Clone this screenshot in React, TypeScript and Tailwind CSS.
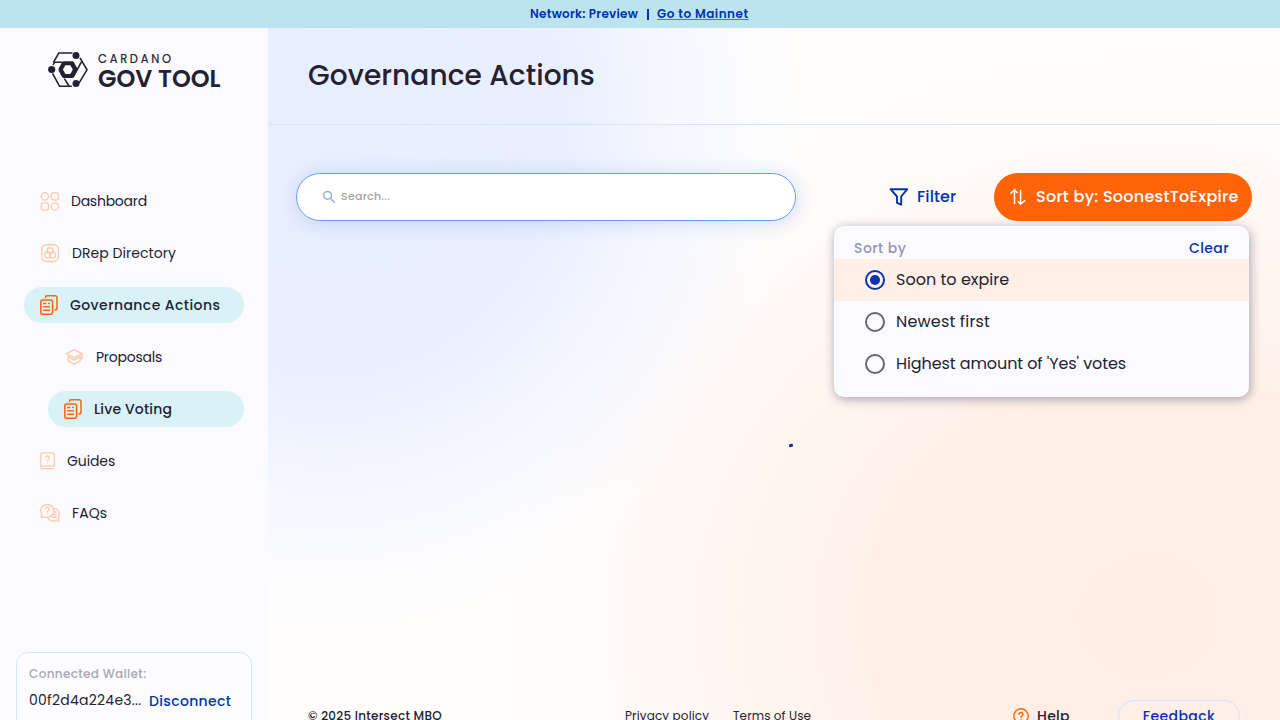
import React from "react";

const Logo = () => (
  <svg width="40" height="36" viewBox="0 0 40 36" fill="none" stroke="#242232" strokeWidth="1.6">
    <path d="M5.4 10.4 L10.8 1 H24.5" />
    <path d="M32 5.8 L39 17.8 L31 31.2" />
    <path d="M33.6 9.6 L25.6 24" />
    <path d="M5 12.8 L6.6 10.2 H14" />
    <path d="M4.5 21.4 L11.6 34.3 H23.8" />
    <path d="M16.4 26.6 L21 34" />
    <g fill="#242232" stroke="none">
      <circle cx="28" cy="3.4" r="3.5" />
      <circle cx="3.7" cy="17.5" r="3.6" />
      <circle cx="28" cy="31.6" r="3.5" />
      <path
        fillRule="evenodd"
        d="M15.6 9.2 h8.8 q.9 0 1.4 .8 l3.4 6.3 q.6 1.3 0 2.6 l-3.4 6.3 q-.5 .8 -1.4 .8 h-8.8 q-.9 0 -1.4 -.8 l-3.4 -6.3 q-.6 -1.3 0 -2.6 l3.4 -6.3 q.5 -.8 1.4 -.8z M17.4 13.2 L14.9 17.6 L17.4 22.1 H22.3 L24.8 17.6 L22.3 13.2z"
      />
    </g>
  </svg>
);

const DashboardIcon = () => (
  <svg width="19" height="19" viewBox="0 0 19 19" fill="none" stroke="#ffcbad" strokeWidth="1.4">
    <circle cx="4.9" cy="4.4" r="3.6" />
    <rect x="11.3" y="0.8" width="7.2" height="7.2" rx="2.2" />
    <rect x="1.3" y="10.9" width="7.2" height="7.2" rx="2.2" />
    <circle cx="14.9" cy="14.5" r="3.6" />
  </svg>
);

const DRepIcon = () => (
  <svg width="20" height="20" viewBox="0 0 20 20" fill="none" stroke="#ffcbad" strokeWidth="1.4">
    <rect x="1.7" y="1.7" width="16.8" height="16.8" rx="4.8" />
    <circle cx="10.1" cy="7.7" r="3" />
    <circle cx="7.6" cy="11.9" r="3" />
    <circle cx="12.6" cy="11.9" r="3" />
  </svg>
);

const ActionsIcon = () => (
  <svg width="18" height="20" viewBox="0 0 18 20" fill="none" stroke="#ff640a" strokeWidth="1.5" strokeLinecap="round">
    <rect x="0.8" y="4.9" width="11.8" height="14.3" rx="2" />
    <path d="M5.5 2.4 C5.5 1.3 6.1 .8 7.2 .8 H15 C16.3 .8 17 1.5 17 2.8 V13 C17 14.4 16.3 15 14.9 15" />
    <path d="M3.8 8.4 H5.7 M8.6 8.4 h.6 M3.8 11.8 H9.4 M3.8 15.2 H9.4" />
  </svg>
);

const ProposalsIcon = () => (
  <svg width="20" height="20" viewBox="0 0 20 20" fill="none" stroke="#ffcbad" strokeWidth="1.5" strokeLinejoin="round" strokeLinecap="round">
    <path d="M10.2 2.6 L18 6.7 L10.2 10.8 L2.5 6.7z" />
    <path d="M18 6.9 V12" />
    <path d="M4.1 9.6 L10.2 13.2 L16.3 9.6 V13.6 L10.2 17.3 L4.1 13.6z" />
  </svg>
);

const GuidesIcon = () => (
  <svg width="15" height="18" viewBox="0 0 15 18" fill="none" stroke="#ffcbad" strokeWidth="1.3" strokeLinecap="round">
    <path d="M14 16.6 H2.4 C1.3 16.6 .8 16 .8 15.1 V2.3 C.8 1.3 1.4 .8 2.4 .8 H12.8 C13.8 .8 14.3 1.3 14.3 2.2 V13.8 H2.2" />
    <path d="M5.7 5.5 C5.8 3.6 9.4 3.6 9.4 5.7 C9.4 7.2 7.6 7.2 7.6 8.7 M7.6 10.6 v.2" />
  </svg>
);

const FaqIcon = () => (
  <svg width="20" height="20" viewBox="0 0 20 20" fill="none" stroke="#ffcbad" strokeWidth="1.4" strokeLinecap="round" strokeLinejoin="round">
    <path d="M7.2 1.5 C10.8 1.5 13.6 4.2 13.6 7.8 C13.6 11.4 10.8 14.2 7.2 14.2 H.9 L2.1 11.8 C.9 10.5 .8 9 .8 7.8 C.8 4.2 3.6 1.5 7.2 1.5z" />
    <path d="M14.2 5.5 C17.2 5.8 19.3 8.3 19.3 11.2 C19.3 13 18.8 14.2 17.9 15.3 L19.2 18 H13.2 C10.8 18 9 16.8 7.9 15" />
    <path d="M5.3 5.9 C5.4 3.7 9.2 3.8 9.1 6 C9.1 7.5 7.2 7.4 7.2 9 M7.2 11 v.1" />
    <path d="M14.4 9 H16 M13.4 11.5 H16.2 M11.6 14 H16.2" />
  </svg>
);

const HelpIcon = () => (
  <svg width="16" height="16" viewBox="0 0 16 16" fill="none" stroke="#ff640a" strokeWidth="1.4" strokeLinecap="round">
    <circle cx="8" cy="8" r="7.2" />
    <path d="M6 6.4 C6 3.9 10 3.9 10 6.4 C10 8 8 7.8 8 9.4 M8 11.6 v.1" />
  </svg>
);

const FilterIcon = () => (
  <svg width="20" height="20" viewBox="0 0 20 20" fill="none" stroke="#0033ad" strokeWidth="1.9" strokeLinejoin="round">
    <path d="M1.5 2.2 H18.3 L12.2 9.5 V17.7 L8 15.8 V9.5z" />
  </svg>
);

const SortIcon = () => (
  <svg width="18" height="18" viewBox="0 0 18 18" fill="none" stroke="#fff" strokeWidth="1.5">
    <path d="M1.4 5.6 L5.5 2 V16" />
    <path d="M5.5 2 L8.6 5" />
    <path d="M11.6 2 V16 L16.2 12.4" />
    <path d="M11.6 16 L8.8 13.2" />
  </svg>
);

const SearchIcon = () => (
  <svg width="14" height="14" viewBox="0 0 14 14" fill="none" stroke="#99adde" strokeWidth="1.5">
    <circle cx="5.6" cy="5.3" r="3.9" />
    <path d="M8.4 8.2 L12.7 12.7" />
  </svg>
);

type Item = { label: string; icon: React.ReactNode; text: string; nested?: boolean; active?: boolean };

const items: Item[] = [
  { label: "Dashboard", icon: <DashboardIcon />, text: "tracking-[-0.25px]" },
  { label: "DRep Directory", icon: <DRepIcon />, text: "tracking-[0.05px]" },
  { label: "Governance Actions", icon: <ActionsIcon />, text: "tracking-[0.42px]", active: true },
  { label: "Proposals", icon: <ProposalsIcon />, text: "tracking-[-0.25px]", nested: true },
  { label: "Live Voting", icon: <ActionsIcon />, text: "tracking-[0.15px]", nested: true, active: true },
  { label: "Guides", icon: <GuidesIcon />, text: "tracking-[-0.1px]" },
  { label: "FAQs", icon: <FaqIcon />, text: "tracking-[0.1px]" },
];

const Sidebar = () => (
  <aside className="flex w-[268px] shrink-0 flex-col bg-[#fbfbff]">
    <div className="ml-12 mt-6 flex h-9 gap-[10px]">
      <Logo />
      <div className="flex flex-col whitespace-nowrap">
        <span className="text-[11.5px] leading-[14px] tracking-[2.75px] [-webkit-text-stroke:0.2px_#242232]">CARDANO</span>
        <span className="text-[24px] font-semibold leading-[25px] tracking-[0px]">GOV TOOL</span>
      </div>
    </div>
    <nav className="mt-[95px] flex flex-col gap-4 px-6">
      {items.map((item) => (
        <div
          key={item.label}
          className={`flex h-9 items-center gap-3 rounded-full pl-4 text-sm ${item.nested ? "ml-6" : ""} ${
            item.active ? "bg-[#d8f2f7] font-medium" : ""
          }`}
        >
          {item.icon}
          <span className={`whitespace-nowrap ${item.text}`}>{item.label}</span>
        </div>
      ))}
    </nav>
    <div className="mx-4 mt-[121px] h-[90px] shrink-0 rounded-xl border border-[#d6e2ff] bg-[#fdfdff] px-3 pt-3">
      <div className="text-xs font-medium leading-[18px] tracking-[0.35px] text-[#a8a8ab]">Connected Wallet:</div>
      <div className="mt-[6px] flex items-center gap-2 whitespace-nowrap text-sm leading-5">
        <span className="w-[112px] tracking-[0.25px]">00f2d4a224e3...</span>
        <span className="mt-[2px] font-medium tracking-[0.35px] text-[#0033ad]">Disconnect</span>
      </div>
    </div>
  </aside>
);

const Radio = ({ checked }: { checked?: boolean }) => (
  <span
    className={`flex h-5 w-5 items-center justify-center rounded-full border-2 ${
      checked ? "border-[#0033ad]" : "border-[#666666]"
    }`}
  >
    {checked && <span className="h-[10px] w-[10px] rounded-full bg-[#0033ad]" />}
  </span>
);

const options = [
  { label: "Soon to expire", text: "tracking-[0.02px]" },
  { label: "Newest first", text: "tracking-[0.17px]" },
  { label: "Highest amount of 'Yes' votes", text: "tracking-[-0.09px]" },
];

const SortMenu = () => (
  <div className="absolute right-[3px] top-[53px] h-[171px] w-[415px] rounded-[10px] bg-[#fbfbff] shadow-[1px_2px_11px_0px_rgba(0,18,61,0.37)]">
    <div className="flex h-[33px] items-start justify-between px-5 pt-3 text-sm font-medium leading-5">
      <span className="tracking-[0.45px] text-[#9792b5]">Sort by</span>
      <span className="tracking-[0.4px] text-[#0033ad]">Clear</span>
    </div>
    {options.map((option, index) => (
      <div
        key={option.label}
        className={`flex h-[42px] items-center gap-[11px] pl-[31px] text-base ${index === 0 ? "bg-[#fff0e7]" : ""}`}
      >
        <Radio checked={index === 0} />
        <span className={option.text}>{option.label}</span>
      </div>
    ))}
  </div>
);

export default function App() {
  return (
    <div className="flex h-[720px] w-full flex-col overflow-hidden font-['Poppins','Inter',sans-serif] text-[#242232]">
      <div className="flex h-7 shrink-0 items-center justify-center gap-2 bg-[#bce4f0] text-xs font-semibold text-[#0033ad]">
        <span className="-ml-px w-[109px] whitespace-nowrap tracking-[0.25px]">Network: Preview</span>
        <span className="h-[11px] w-[2px] bg-[#0033ad]" />
        <span className="w-[92px] whitespace-nowrap leading-4 tracking-[0.5px] underline decoration-[#4a70c8] decoration-1 underline-offset-1">
          Go to Mainnet
        </span>
      </div>
      <div className="flex min-h-0 flex-1">
        <Sidebar />
        <main className="flex min-w-0 flex-1 flex-col bg-[#fffefd] bg-[radial-gradient(ellipse_470px_510px_at_60px_90px,#e7eeff_0%,#e9efff_50%,rgba(240,244,255,0.7)_72%,rgba(255,255,255,0)_100%),radial-gradient(ellipse_640px_560px_at_880px_590px,#ffeee5_0%,#fff0e7_40%,rgba(255,243,236,0.75)_65%,rgba(255,255,255,0)_100%)]">
          <header className="flex h-[97px] shrink-0 items-center border-b border-[#d6e2ff] pl-10">
            <h1 className="text-[28px] font-medium tracking-[0.08px]">Governance Actions</h1>
          </header>
          <section className="flex h-[575px] shrink-0 flex-col px-7 pt-12">
            <div className="relative flex h-12 shrink-0 items-center">
              <div className="flex h-12 w-[500px] items-center gap-[5px] rounded-full border border-[#6e9bff] bg-white pl-[25px] text-[11px] font-medium text-[#a5a5a5] shadow-[2px_2px_20px_0px_rgba(47,98,220,0.2)]">
                <SearchIcon />
                <span className="mb-[2px] tracking-[0.25px]">Search...</span>
              </div>
              <div className="ml-auto mr-[38px] flex items-center gap-2 font-medium text-[#0033ad]">
                <FilterIcon />
                <span className="w-[39px] whitespace-nowrap tracking-[0.1px]">Filter</span>
              </div>
              <div className="flex h-12 w-[258px] items-center gap-2 rounded-full bg-[#ff640a] pl-[15px] font-medium text-white">
                <SortIcon />
                <span className="ml-[1px] whitespace-nowrap tracking-[0.28px]">Sort by: SoonestToExpire</span>
              </div>
              <SortMenu />
            </div>
            <div className="ml-[493px] mt-[223px] h-[3px] w-1 -rotate-12 rounded-[1px] bg-[#0033ad]" />
          </section>
          <footer className="flex h-8 shrink-0 items-center pl-10 pr-10 text-xs whitespace-nowrap">
            <span className="w-[317px] font-medium tracking-[0.27px]">© 2025 Intersect MBO</span>
            <span className="w-[108px] tracking-[0.14px]">Privacy policy</span>
            <span className="tracking-[0.1px]">Terms of Use</span>
            <span className="ml-auto mr-12 flex items-center gap-2 text-sm font-medium">
              <HelpIcon />
              <span className="w-[33px] tracking-[0.3px]">Help</span>
            </span>
            <span className="flex h-8 w-[122px] items-center justify-center rounded-full border border-[#d6e2ff] text-sm font-medium tracking-[0.4px] text-[#0033ad]">
              Feedback
            </span>
          </footer>
        </main>
      </div>
    </div>
  );
}
